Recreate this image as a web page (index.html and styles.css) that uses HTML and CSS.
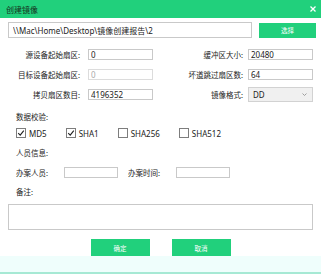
FILE: index.html
```html
<!DOCTYPE html>
<html lang="zh-CN">
<head>
    <meta charset="UTF-8">
    <meta name="viewport" content="width=device-width, initial-scale=1.0">
    <title>创建镜像</title>
    <link rel="stylesheet" href="styles.css">
</head>
<body>
    <div class="dialog">
        <div class="titlebar">
            <span class="title">创建镜像</span>
            <svg class="close-btn" width="6" height="6" viewBox="0 0 6 6">
                <path d="M0.5 0.5 L5.5 5.5 M5.5 0.5 L0.5 5.5" stroke="#fff" stroke-width="1.3" fill="none"/>
            </svg>
        </div>

        <div class="path-row">
            <input class="text-input path-input" type="text" value="\\Mac\Home\Desktop\镜像创建报告\2">
            <button class="btn pick-btn">选择</button>
        </div>

        <div class="fields">
            <label class="lbl">源设备起始扇区:</label>
            <input class="text-input" type="text" value="0">
            <label class="lbl lbl-right">缓冲区大小:</label>
            <input class="text-input" type="text" value="20480">

            <label class="lbl">目标设备起始扇区:</label>
            <input class="text-input disabled" type="text" value="0" disabled>
            <label class="lbl lbl-right">坏道跳过扇区数:</label>
            <input class="text-input" type="text" value="64">

            <label class="lbl">拷贝扇区数目:</label>
            <input class="text-input" type="text" value="4196352">
            <label class="lbl lbl-right">镜像格式:</label>
            <div class="select">
                <span>DD</span>
                <svg width="5" height="3" viewBox="0 0 5 3">
                    <path d="M0.5 0.5 L2.5 2.5 L4.5 0.5" stroke="#8a8a8a" stroke-width="0.8" fill="none"/>
                </svg>
            </div>
        </div>

        <div class="section">数据校验:</div>
        <div class="checks">
            <div class="check">
                <span class="box">
                    <svg width="8" height="8" viewBox="0 0 8 8"><path d="M1.2 4.2 L3.2 6.2 L6.8 1.6" stroke="#222" stroke-width="1.1" fill="none"/></svg>
                </span>
                <span>MD5</span>
            </div>
            <div class="check">
                <span class="box">
                    <svg width="8" height="8" viewBox="0 0 8 8"><path d="M1.2 4.2 L3.2 6.2 L6.8 1.6" stroke="#222" stroke-width="1.1" fill="none"/></svg>
                </span>
                <span>SHA1</span>
            </div>
            <div class="check">
                <span class="box"></span>
                <span>SHA256</span>
            </div>
            <div class="check">
                <span class="box"></span>
                <span>SHA512</span>
            </div>
        </div>

        <div class="section">人员信息:</div>
        <div class="person-row">
            <span class="person-lbl">办案人员:</span>
            <input class="text-input person-input" type="text">
            <span class="person-lbl second">办案时间:</span>
            <input class="text-input person-input" type="text">
        </div>

        <div class="section">备注:</div>
        <textarea class="notes"></textarea>

        <div class="actions">
            <button class="btn action-btn">确定</button>
            <button class="btn action-btn">取消</button>
        </div>

        <div class="footer"></div>
    </div>
</body>
</html>
```

FILE: styles.css
```css
body {
    margin: 0;
    padding: 0;
    width: 321px;
    height: 279px;
    overflow: hidden;
    background: white;
    font-family: "Noto Sans", "Noto Sans CJK SC", sans-serif;
    font-size: 7.5px;
    color: #222;
}

.titlebar {
    height: 18px;
    background: #21d07c;
    display: flex;
    align-items: center;
    justify-content: space-between;
    padding: 0 5px 0 6px;
}

.title {
    font-size: 8px;
    color: #163020;
}

.text-input {
    box-sizing: border-box;
    height: 11px;
    border: 1px solid #c9c9c9;
    padding: 0 2px;
    margin: 0;
    font-family: "Noto Sans", "Noto Sans CJK SC", sans-serif;
    font-size: 8px;
    color: #222;
    background: white;
    outline: none;
}

.text-input.disabled {
    border-color: #dcdcdc;
    color: #aaa;
}

.path-row {
    display: flex;
    align-items: center;
    margin: 4px 0 0 8px;
}

.path-input {
    width: 244px;
    height: 16px;
    padding: 0 4px;
}

.btn {
    background: #21d07c;
    color: white;
    border: none;
    padding: 0;
    font-family: "Noto Sans CJK SC", sans-serif;
    font-size: 6.5px;
    cursor: pointer;
}

.pick-btn {
    width: 57px;
    height: 15px;
    margin-left: 7px;
}

.fields {
    display: grid;
    grid-template-columns: 88px 65px 95px 65px;
    grid-auto-rows: 20px;
    align-items: center;
    margin-top: 6px;
}

.lbl {
    text-align: right;
    padding-right: 8px;
}

.lbl-right {
    padding-right: 5px;
}

.select {
    box-sizing: border-box;
    height: 15px;
    border: 1px solid #d2d2d2;
    background: #f0f0f0;
    display: flex;
    align-items: center;
    justify-content: space-between;
    padding: 0 5px 0 4px;
    font-size: 8px;
}

.section {
    margin: 6px 0 0 16px;
    line-height: 14px;
}

.checks {
    display: flex;
    align-items: center;
    gap: 19px;
    height: 14px;
    margin: 2px 0 0 16px;
    font-size: 8px;
}

.check {
    display: flex;
    align-items: center;
    gap: 3px;
}

.box {
    box-sizing: border-box;
    width: 10px;
    height: 10px;
    border: 1px solid #7d7d7d;
    background: white;
    display: flex;
    align-items: center;
    justify-content: center;
}

.person-row {
    display: flex;
    align-items: center;
    height: 14px;
    margin: 5px 0 0 16px;
}

.person-lbl {
    width: 48px;
}

.person-lbl.second {
    margin-left: 10px;
}

.person-input {
    width: 54px;
}

.notes {
    display: block;
    box-sizing: border-box;
    width: 305px;
    height: 26px;
    margin: 5px 0 0 8px;
    border: 1px solid #c9c9c9;
    resize: none;
    outline: none;
}

.actions {
    display: flex;
    justify-content: center;
    gap: 22px;
    margin-top: 9px;
}

.action-btn {
    width: 59px;
    height: 17px;
}

.footer {
    height: 16px;
    background: #effefc;
    border-bottom: 2px solid #a6e9d4;
}
```
